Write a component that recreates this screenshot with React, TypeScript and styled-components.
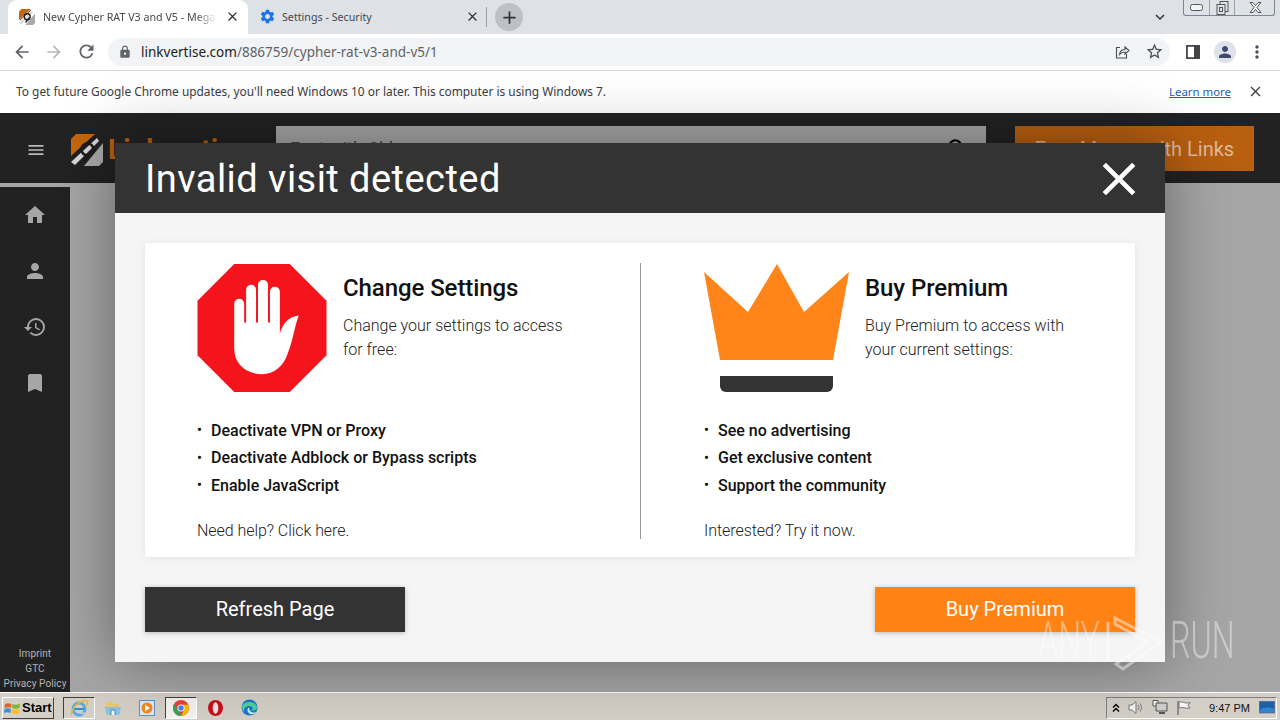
import React from 'react';
import styled, { createGlobalStyle } from 'styled-components';
import {
  MdArrowBack,
  MdArrowForward,
  MdBookmark,
  MdClose,
  MdExpandMore,
  MdHistory,
  MdHome,
  MdLock,
  MdMenu,
  MdMoreVert,
  MdPerson,
  MdRefresh,
  MdSearch,
  MdSettings,
  MdStarBorder,
  MdAdd,
} from 'react-icons/md';

const GlobalStyle = createGlobalStyle`
  html, body { margin: 0; padding: 0; overflow: hidden; }
  body { font-family: "Noto Sans", sans-serif; }
  * { box-sizing: border-box; }
`;

const Screen = styled.div`
  width: 1280px;
  height: 720px;
  display: flex;
  flex-direction: column;
  position: relative;
  overflow: hidden;
  background: #fff;
`;

/* browser chrome */
const TabStrip = styled.div`
  height: 34px;
  flex: none;
  background: #dee1e6;
  display: flex;
  align-items: flex-end;
  padding-left: 8px;
  position: relative;
`;

const Tab = styled.div<{ $active?: boolean }>`
  width: 240px;
  height: 34px;
  display: flex;
  align-items: center;
  gap: ${(p) => (p.$active ? '8px' : '6px')};
  padding: 0 8px 1px 11px;
  border-radius: 9px 9px 0 0;
  background: ${(p) => (p.$active ? '#fff' : 'transparent')};
  color: #45484c;
  font-size: 10.7px;
  svg { flex: none; }
`;

const TabTitle = styled.span<{ $fade?: boolean }>`
  flex: 1;
  white-space: nowrap;
  overflow: hidden;
  line-height: 16px;
  mask-image: ${(p) => (p.$fade ? 'linear-gradient(90deg, #000 88%, transparent)' : 'none')};
`;

const TabSeparator = styled.div`
  width: 1px;
  height: 20px;
  margin: 0 0 7px -2px;
  background: #9aa0a6;
`;

const NewTab = styled.div`
  width: 28px;
  height: 28px;
  margin: 0 0 3px 8px;
  border-radius: 50%;
  background: #bdc1c6;
  color: #333;
  display: flex;
  align-items: center;
  justify-content: center;
`;

const TabListButton = styled.div`
  margin: 0 14px 7px auto;
  height: 20px;
  color: #333;
  display: flex;
  align-items: center;
`;

const WindowButtons = styled.div`
  width: 92px;
  height: 16px;
  margin: 0 5px auto 0;
  display: grid;
  grid-template-columns: 25px 25px 42px;
  border: 1px solid #7d8590;
  border-top: none;
  border-radius: 0 0 3px 3px;
  background: #dfe3e8;
`;

const WindowButton = styled.div`
  display: flex;
  align-items: center;
  justify-content: center;
  & + & { border-left: 1px solid #9aa2ac; }
`;

const Toolbar = styled.div`
  height: 37px;
  flex: none;
  background: #fff;
  border-bottom: 1px solid #d5d6d8;
  display: flex;
  align-items: center;
  padding: 0 6px 1px 6px;
`;

const NavIcon = styled.div<{ $dim?: boolean }>`
  width: 32px;
  height: 28px;
  display: flex;
  align-items: center;
  justify-content: center;
  color: ${(p) => (p.$dim ? '#b5b8bc' : '#5f6368')};
`;

const Omnibox = styled.div`
  width: 1062px;
  height: 28px;
  margin-left: 6px;
  padding-left: 10px;
  border-radius: 14px;
  background: #f1f3f4;
  display: flex;
  align-items: center;
  color: #5f6368;
  font-size: 13.5px;
`;

const Url = styled.span`
  margin-left: 9px;
  flex: 1;
  white-space: nowrap;
`;

const Host = styled.span`
  color: #202124;
`;

const OmniIcon = styled.div`
  width: 32px;
  display: flex;
  justify-content: center;
  color: #4a4d51;
`;

const Avatar = styled.div`
  width: 22px;
  height: 22px;
  border-radius: 50%;
  background: #dfe2ea;
  color: #3c4a6b;
  display: flex;
  align-items: center;
  justify-content: center;
`;

const ToolEnd = styled.div`
  display: flex;
  align-items: center;
  margin-left: 7px;
  gap: 5px;
  color: #4a4d51;
`;

const InfoBar = styled.div`
  height: 42px;
  flex: none;
  background: #fff;
  display: flex;
  align-items: center;
  padding: 0 16px 2px;
  font-size: 11.9px;
  color: #3a3c3f;
`;

const InfoText = styled.span`
  flex: 1;
`;

const InfoLink = styled.a`
  color: #1a5fc4;
  text-decoration: underline;
  margin-right: 16px;
  font-size: 11.4px;
`;

/* the page behind the dialog */
const Page = styled.div`
  flex: 1;
  position: relative;
  display: flex;
  flex-direction: column;
  background: #a6a6a6;
  font-family: Roboto, sans-serif;
  min-height: 0;
`;

const SiteHeader = styled.header`
  height: 70px;
  flex: none;
  background: #222;
  display: flex;
  align-items: flex-start;
  padding: 13px 26px 0 26px;
`;

const Burger = styled.div`
  width: 20px;
  margin-top: 12px;
  color: #b9b9b9;
  display: flex;
  justify-content: center;
`;

const Brand = styled.div`
  margin: 7px 0 0 25px;
  width: 205px;
  flex: none;
  display: flex;
  align-items: center;
  gap: 5px;
  color: #b85f10;
  font-size: 28px;
  font-weight: 700;
`;

const SearchBox = styled.div`
  width: 710px;
  height: 45px;
  background: #a6a6a6;
  display: flex;
  align-items: center;
  justify-content: space-between;
  padding: 0 15px 0 14px;
  color: #444;
  font-size: 18px;
`;

const EarnButton = styled.div`
  width: 239px;
  height: 45px;
  margin-left: 29px;
  background: #b85f10;
  color: #ddbb9c;
  font-size: 20px;
  display: flex;
  align-items: center;
  justify-content: center;
`;

const PageBody = styled.div`
  flex: 1;
  margin-top: 4px;
  display: flex;
  min-height: 0;
`;

const Sidebar = styled.nav`
  width: 70px;
  background: #222;
  display: flex;
  flex-direction: column;
  justify-content: space-between;
  color: #a6a6a6;
`;

const SideItem = styled.div`
  height: 56px;
  display: flex;
  align-items: center;
  justify-content: center;
`;

const SideLinks = styled.div`
  padding-bottom: 1px;
  display: flex;
  flex-direction: column;
  align-items: center;
  font-size: 10px;
  line-height: 15px;
  letter-spacing: 0.1px;
  color: #b5b5b5;
  white-space: nowrap;
`;

/* dialog */
const Modal = styled.div`
  position: absolute;
  left: 115px;
  top: 30px;
  width: 1050px;
  background: #f5f5f5;
  box-shadow: 0 0 60px rgba(0, 0, 0, 0.4);
`;

const ModalHeader = styled.div`
  height: 70px;
  background: #333;
  color: #fff;
  display: flex;
  align-items: center;
  justify-content: space-between;
  padding: 2px 18px 0 30px;
  font-size: 38px;
  letter-spacing: 0.45px;
`;

const ModalBody = styled.div`
  padding: 30px;
`;

const Card = styled.div`
  height: 314px;
  padding: 20px 0 18px;
  background: #fff;
  display: grid;
  grid-template-columns: 495px 1fr;
  grid-template-rows: 276px;
  box-shadow: 0 1px 8px rgba(0, 0, 0, 0.08);
`;

const Column = styled.section<{ $divided?: boolean }>`
  padding: 1px 0 0 ${(p) => (p.$divided ? '63px' : '52px')};
  border-left: ${(p) => (p.$divided ? '1px solid #9a9a9a' : 'none')};
`;

const Intro = styled.div`
  display: flex;
  gap: 16px;
`;

const IntroText = styled.div`
  padding-top: 9px;
`;

const Heading = styled.h2`
  margin: 0 0 11px;
  font-size: 24px;
  line-height: 30px;
  font-weight: 500;
  letter-spacing: -0.08px;
  color: #111;
`;

const Lead = styled.p`
  margin: 0;
  font-size: 16px;
  line-height: 24px;
  font-weight: 300;
  color: #222;
`;

const Points = styled.ul`
  list-style: none;
  margin: 24.6px 0 20px;
  padding: 0;
`;

const Point = styled.li`
  height: 27.5px;
  display: flex;
  align-items: center;
  font-size: 16px;
  font-weight: 500;
  color: #111;
  &::before {
    content: '•';
    width: 14px;
    font-size: 14px;
  }
`;

const Foot = styled.div`
  font-size: 16px;
  line-height: 24px;
  font-weight: 300;
  letter-spacing: -0.05px;
  color: #222;
`;

const Actions = styled.div`
  margin-top: 30px;
  display: flex;
  justify-content: space-between;
`;

const ActionButton = styled.div<{ $primary?: boolean }>`
  width: 260px;
  height: 45px;
  padding-bottom: 2px;
  background: ${(p) => (p.$primary ? '#ff8214' : '#333')};
  color: #fff;
  font-size: 20px;
  display: flex;
  align-items: center;
  justify-content: center;
  box-shadow: 0 1px 5px rgba(0, 0, 0, 0.25);
`;

/* watermark */
const Watermark = styled.div`
  position: absolute;
  left: 1038px;
  top: 610px;
  width: 194px;
  height: 62px;
  display: flex;
  align-items: center;
  justify-content: space-between;
  color: rgba(255, 255, 255, 0.42);
  font-family: Roboto, sans-serif;
  font-size: 52px;
  font-weight: 300;
  pointer-events: none;
`;

const MarkText = styled.span`
  display: block;
  width: 62px;
  line-height: 62px;
  transform: scaleX(0.62);
  transform-origin: left center;
  white-space: nowrap;
`;

/* taskbar */
const Taskbar = styled.div`
  height: 28px;
  flex: none;
  background: #d4d0c8;
  border-top: 1px solid #fff;
  display: flex;
  align-items: center;
  padding: 2px 3px 0 2px;
  font-family: "Liberation Sans", sans-serif;
`;

const StartButton = styled.div`
  width: 52px;
  height: 22px;
  display: flex;
  align-items: center;
  gap: 1px;
  padding-left: 1px;
  font-size: 13px;
  font-weight: 700;
  color: #000;
  border: 1px solid;
  border-color: #fff #404040 #404040 #fff;
  margin-right: 9px;
`;

const TaskSlots = styled.div`
  display: flex;
  gap: 2px;
`;

const TaskSlot = styled.div<{ $pressed?: boolean; $active?: boolean }>`
  width: 32px;
  height: 22px;
  display: flex;
  align-items: center;
  justify-content: center;
  background: ${(p) => (p.$active ? '#f4f3f0' : 'transparent')};
  border: 1px solid ${(p) => (p.$pressed ? '#404040' : 'transparent')};
  border-right-color: ${(p) => (p.$pressed ? '#fff' : 'transparent')};
  border-bottom-color: ${(p) => (p.$pressed ? '#fff' : 'transparent')};
`;

const Tray = styled.div`
  margin-left: auto;
  width: 171px;
  height: 22px;
  display: flex;
  align-items: center;
  padding: 0 1px 0 5px;
  border: 1px solid;
  border-color: #808080 #fff #fff #808080;
  font-size: 11px;
  color: #111;
`;

const TrayIcons = styled.div`
  display: flex;
  align-items: center;
  gap: 8px;
`;

const Clock = styled.span`
  margin-left: 17px;
  white-space: nowrap;
`;

const ShowDesktop = styled.div`
  margin-left: auto;
  display: flex;
`;

const BrandMark = ({ size }: { size: number }) => (
  <svg width={size} height={size} viewBox="0 0 32 32">
    <path d="M0 5 L5 0 H24 L0 22 Z" fill="#c4670f" />
    <path d="M32 9 V28 L28 32 H13 Z" fill="#a9a9a9" />
    <path d="M0 28 L26 4 L28 7 L4 31 Z" fill="#d8d8d8" />
    <circle cx="16.5" cy="15.5" r="6" fill="none" stroke="#1d1d1d" strokeWidth="2.6" />
    <path d="M21 17 L13 27" stroke="#1d1d1d" strokeWidth="2.6" />
    <path d="M2 22 L24 2" stroke="#1d1d1d" strokeWidth="1.6" />
  </svg>
);

const StopHand = () => (
  <svg width="130" height="128" viewBox="0 0 130 129">
    <path d="M37 0H93L130 37V92L93 129H37L0 92V37Z" fill="#f5141c" />
    <path
      d="M37 40a5 5 0 0 1 10 0V59h2V26a5 5 0 0 1 10 0V59h2V21a5 5 0 0 1 10 0V59h2V28a5 5 0 0 1 10 0V70C86 60 92 53 102 52C98 62 96 78 91 90C87 103 77 111 65 111C48 111 37 100 37 85Z"
      fill="#fff"
    />
  </svg>
);

const Crown = () => (
  <svg width="145" height="128" viewBox="0 0 145 128">
    <path d="M0 8L44 48L73 0L100 48L145 8L129 96H16Z" fill="#ff8419" />
    <path d="M16 112H129V122a6 6 0 0 1-6 6H22a6 6 0 0 1-6-6Z" fill="#333" />
  </svg>
);

const ShareBox = () => (
  <svg width="16" height="16" viewBox="0 0 16 16" fill="none" stroke="currentColor" strokeWidth="1.1">
    <path d="M6 3.5H2.5V14H12.5V10" />
    <path d="M5.5 10.5C6 7 8.5 5.5 11 5.5V3L15 6.5L11 10V8C8.5 8 7 8.7 5.5 10.5Z" />
  </svg>
);

const SidePanel = () => (
  <svg width="14" height="14" viewBox="0 0 14 14">
    <path d="M0 0H14V14H0Z M1.8 1.8V12.2H8V1.8Z" fillRule="evenodd" fill="#444" />
  </svg>
);

const ChromeLogo = ({ size }: { size: number }) => (
  <svg width={size} height={size} viewBox="0 0 16 16">
    <circle cx="8" cy="8" r="8" fill="#ea4335" />
    <path d="M8 16A8 8 0 0 1 1 4L5 11L9 16Z" fill="#34a853" />
    <path d="M16 8A8 8 0 0 1 8 16L11.5 9.5L8 4.8H15A8 8 0 0 1 16 8Z" fill="#fbbc05" />
    <circle cx="8" cy="8" r="3.6" fill="#fff" />
    <circle cx="8" cy="8" r="2.7" fill="#4285f4" />
  </svg>
);

const WindowsFlag = () => (
  <svg width="17" height="16" viewBox="0 0 17 16">
    <path d="M1 4C3 3 5 3 7.5 4L7 8C5 7 3 7 .5 8Z" fill="#e8602a" />
    <path d="M8.5 4C11 5 13 5 16 3.5L15.5 8C13 9 10.5 9 8 8Z" fill="#7cb53c" />
    <path d="M.5 9C3 8 5 8 7 9L6.5 13C4 12 2 12 0 13Z" fill="#3f8fd8" />
    <path d="M8 9C10.5 10 13 10 15.5 9L15 13.5C12.5 14.5 10 14 7.5 13Z" fill="#f5c02c" />
  </svg>
);

const IeLogo = () => (
  <svg width="20" height="18" viewBox="0 0 20 18">
    <circle cx="10" cy="10" r="6" fill="none" stroke="#58a8e6" strokeWidth="3" />
    <path d="M5 10H15" stroke="#2b8fdc" strokeWidth="2" />
    <path d="M12 13.5H17L16 15H11Z" fill="#d4d0c8" />
    <path d="M2 16C4 7 12 0 18 2C19.5 4 18 6 16.5 7.5" fill="none" stroke="#e8b93a" strokeWidth="1.6" />
  </svg>
);

const FolderLogo = () => (
  <svg width="18" height="18" viewBox="0 0 18 18">
    <path d="M2 3H8L10 5H15V8H2Z" fill="#e9c873" />
    <path d="M1 8H17L15.5 16H2.5Z" fill="#8cc3dd" />
    <path d="M7 16V11H11V16" fill="#f4f4f4" stroke="#4f8fb8" />
  </svg>
);

const MediaLogo = () => (
  <svg width="16" height="16" viewBox="0 0 16 16">
    <rect x=".5" y=".5" width="15" height="15" fill="#dcebf7" stroke="#5d93c7" />
    <circle cx="8" cy="8" r="5.5" fill="#f08a1e" />
    <path d="M6 4.8L11 8L6 11.2Z" fill="#fff" />
  </svg>
);

const OperaLogo = () => (
  <svg width="15" height="16" viewBox="0 0 15 16">
    <ellipse cx="7.5" cy="8" rx="7.5" ry="8" fill="#c8101c" />
    <ellipse cx="7.5" cy="8" rx="2.8" ry="5.8" fill="#f3e4e4" />
  </svg>
);

const EdgeLogo = () => (
  <svg width="17" height="17" viewBox="0 0 17 17">
    <circle cx="8.5" cy="8.5" r="8" fill="#1b78c7" />
    <path d="M1 7C3 2 14 1 16 8C16.5 11 13 12 10 11.5C13 10 12 7 8.5 7C5 7 2.5 9 3 13C1.5 11.5 .8 9 1 7Z" fill="#4fd0a0" />
    <path d="M8 8.5C6 9 5.5 13 9 15C11.5 15.8 14 15 15.5 13C12 14.5 8 13 8 8.5Z" fill="#cfeee6" />
  </svg>
);

const SpeakerIcon = () => (
  <svg width="16" height="15" viewBox="0 0 16 15" fill="none" stroke="#777">
    <path d="M1 5H4L8 1.5V13.5L4 10H1Z" fill="#f4f4f4" />
    <path d="M10 5C11 6.5 11 8.5 10 10M12 3.5C14 6 14 9 12 11.5" />
  </svg>
);

const NetworkIcon = () => (
  <svg width="16" height="15" viewBox="0 0 16 15">
    <path d="M1 0.5H6V6H1Z" fill="#fff" stroke="#555" />
    <path d="M4 3H15V11H4Z" fill="#cfcfcf" stroke="#555" />
    <path d="M7 13H13" stroke="#555" strokeWidth="2" />
  </svg>
);

const FlagIcon = () => (
  <svg width="16" height="15" viewBox="0 0 16 15" fill="none" stroke="#777">
    <path d="M2 1V15" strokeWidth="1.5" />
    <path d="M3 2C6 1 8 4 14 2.5L12 5.5L14 8C9 9 7 6.5 3 8Z" fill="#f7f7f7" />
  </svg>
);

const PlayMark = () => (
  <svg width="58" height="62" viewBox="0 0 58 62" fill="none" stroke="rgba(255,255,255,.45)" strokeWidth="3">
    <path d="M2 12V50" />
    <path d="M9 8L55 32L17 59L10 54L42 32L9 14Z" />
  </svg>
);

export default function App() {
  return (
    <Screen>
      <GlobalStyle />
      <TabStrip>
        <Tab $active>
          <BrandMark size={16} />
          <TabTitle $fade>New Cypher RAT V3 and V5 - Mega Links</TabTitle>
          <MdClose size={15} color="#333" />
        </Tab>
        <Tab>
          <MdSettings size={17} color="#1a73e8" />
          <TabTitle>Settings - Security</TabTitle>
          <MdClose size={15} color="#333" />
        </Tab>
        <TabSeparator />
        <NewTab>
          <MdAdd size={21} />
        </NewTab>
        <TabListButton>
          <MdExpandMore size={18} />
        </TabListButton>
        <WindowButtons>
          <WindowButton>
            <svg width="13" height="7" viewBox="0 0 13 7" fill="#f2f4f6" stroke="#555">
              <rect x=".5" y=".5" width="12" height="6" rx="2" />
            </svg>
          </WindowButton>
          <WindowButton>
            <svg width="13" height="14" viewBox="0 0 13 14" fill="none" stroke="#555">
              <rect x="4" y=".5" width="8" height="10" />
              <rect x="1" y="3.5" width="8" height="10" fill="#dfe3e8" />
              <rect x="3.5" y="6.5" width="3" height="4" />
            </svg>
          </WindowButton>
          <WindowButton>
            <svg width="13" height="11" viewBox="0 0 13 11" fill="#f2f4f6" stroke="#555">
              <path d="M1 .5H4L6.5 3.5L9 .5H12L8 5.5L12 10.5H9L6.5 7.5L4 10.5H1L5 5.5Z" />
            </svg>
          </WindowButton>
        </WindowButtons>
      </TabStrip>

      <Toolbar>
        <NavIcon>
          <MdArrowBack size={20} />
        </NavIcon>
        <NavIcon $dim>
          <MdArrowForward size={20} />
        </NavIcon>
        <NavIcon>
          <MdRefresh size={21} />
        </NavIcon>
        <Omnibox>
          <MdLock size={14} />
          <Url>
            <Host>linkvertise.com</Host>/886759/cypher-rat-v3-and-v5/1
          </Url>
          <OmniIcon>
            <ShareBox />
          </OmniIcon>
          <OmniIcon>
            <MdStarBorder size={19} />
          </OmniIcon>
        </Omnibox>
        <ToolEnd>
          <OmniIcon>
            <SidePanel />
          </OmniIcon>
          <Avatar>
            <MdPerson size={18} />
          </Avatar>
          <OmniIcon>
            <MdMoreVert size={20} />
          </OmniIcon>
        </ToolEnd>
      </Toolbar>

      <InfoBar>
        <InfoText>To get future Google Chrome updates, you'll need Windows 10 or later. This computer is using Windows 7.</InfoText>
        <InfoLink>Learn more</InfoLink>
        <MdClose size={17} color="#444" />
      </InfoBar>

      <Page>
        <SiteHeader>
          <Burger>
            <MdMenu size={24} />
          </Burger>
          <Brand>
            <BrandMark size={32} />
            Linkvertise
          </Brand>
          <SearchBox>
            Fast with Chk
            <MdSearch size={26} color="#000" />
          </SearchBox>
          <EarnButton>Earn Money with Links</EarnButton>
        </SiteHeader>

        <PageBody>
          <Sidebar>
            <div>
              <SideItem>
                <MdHome size={24} />
              </SideItem>
              <SideItem>
                <MdPerson size={24} />
              </SideItem>
              <SideItem>
                <MdHistory size={24} />
              </SideItem>
              <SideItem>
                <MdBookmark size={24} />
              </SideItem>
            </div>
            <SideLinks>
              <span>Imprint</span>
              <span>GTC</span>
              <span>Privacy Policy</span>
            </SideLinks>
          </Sidebar>
        </PageBody>

        <Modal>
          <ModalHeader>
            Invalid visit detected
            <MdClose size={56} />
          </ModalHeader>
          <ModalBody>
            <Card>
              <Column>
                <Intro>
                  <StopHand />
                  <IntroText>
                    <Heading>Change Settings</Heading>
                    <Lead>
                      Change your settings to access
                      <br />
                      for free:
                    </Lead>
                  </IntroText>
                </Intro>
                <Points>
                  <Point>Deactivate VPN or Proxy</Point>
                  <Point>Deactivate Adblock or Bypass scripts</Point>
                  <Point>Enable JavaScript</Point>
                </Points>
                <Foot>Need help? Click here.</Foot>
              </Column>
              <Column $divided>
                <Intro>
                  <Crown />
                  <IntroText>
                    <Heading>Buy Premium</Heading>
                    <Lead>
                      Buy Premium to access with
                      <br />
                      your current settings:
                    </Lead>
                  </IntroText>
                </Intro>
                <Points>
                  <Point>See no advertising</Point>
                  <Point>Get exclusive content</Point>
                  <Point>Support the community</Point>
                </Points>
                <Foot>Interested? Try it now.</Foot>
              </Column>
            </Card>
            <Actions>
              <ActionButton>Refresh Page</ActionButton>
              <ActionButton $primary>Buy Premium</ActionButton>
            </Actions>
          </ModalBody>
        </Modal>
      </Page>

      <Taskbar>
        <StartButton>
          <WindowsFlag />
          Start
        </StartButton>
        <TaskSlots>
          <TaskSlot $pressed>
            <IeLogo />
          </TaskSlot>
          <TaskSlot>
            <FolderLogo />
          </TaskSlot>
          <TaskSlot>
            <MediaLogo />
          </TaskSlot>
          <TaskSlot $pressed $active>
            <ChromeLogo size={16} />
          </TaskSlot>
          <TaskSlot>
            <OperaLogo />
          </TaskSlot>
          <TaskSlot>
            <EdgeLogo />
          </TaskSlot>
        </TaskSlots>
        <Tray>
          <TrayIcons>
            <svg width="8" height="10" viewBox="0 0 8 10" fill="none" stroke="#000" strokeWidth="1.4">
              <path d="M1 4.5L4 1.5L7 4.5M1 8.5L4 5.5L7 8.5" />
            </svg>
            <SpeakerIcon />
            <NetworkIcon />
            <FlagIcon />
          </TrayIcons>
          <Clock>9:47 PM</Clock>
          <ShowDesktop>
            <svg width="16" height="14" viewBox="0 0 16 14">
              <rect width="16" height="12" fill="#1f5fa8" stroke="#7a8793" />
              <path d="M1 9C5 6 10 6 15 8V11H1Z" fill="#2f86d6" />
            </svg>
          </ShowDesktop>
        </Tray>
      </Taskbar>

      <Watermark>
        <MarkText>ANY</MarkText>
        <PlayMark />
        <MarkText>RUN</MarkText>
      </Watermark>
    </Screen>
  );
}
